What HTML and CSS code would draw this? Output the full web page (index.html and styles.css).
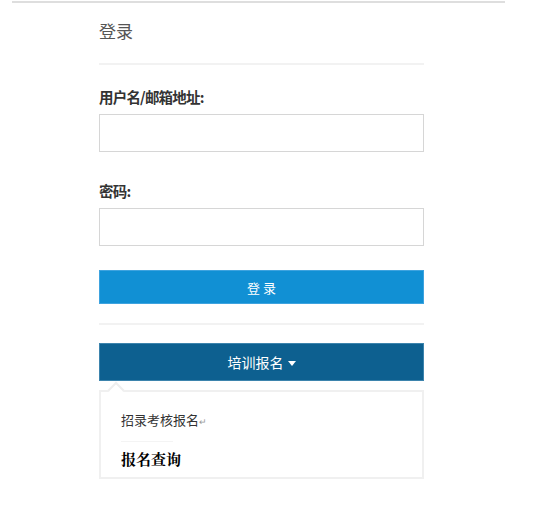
FILE: index.html
```html
<!DOCTYPE html>
<html lang="zh-CN">
<head>
<meta charset="utf-8">
<title>登录</title>
<link rel="stylesheet" href="styles.css">
</head>
<body>
<div class="topline"></div>
<div class="panel">
  <h1 class="title">登录</h1>
  <form class="login">
    <label class="label">用户名/邮箱地址:</label>
    <input class="input" type="text">
    <label class="label label-pwd">密码:</label>
    <input class="input" type="password">
    <button class="btn-login" type="button">登 录</button>
  </form>
  <div class="menu">
    <button class="btn-menu" type="button">培训报名<span class="caret"></span></button>
    <div class="dropdown">
      <div class="item">招录考核报名<span class="ret">↵</span></div>
      <div class="sep"></div>
      <div class="item item-bold">报名查询</div>
    </div>
  </div>
</div>
</body>
</html>
```
FILE: styles.css
```css
html, body {
  margin: 0;
  padding: 0;
  background: #fff;
}
body {
  font-family: "Noto Sans CJK SC", "Noto Sans", sans-serif;
  color: #333;
}
.topline {
  margin: 1px 41px 0 12px;
  height: 2px;
  background: #dedede;
}
.panel {
  margin-left: 99px;
  width: 325px;
}
.title {
  margin: 0;
  padding: 16px 0 20px;
  font-size: 17px;
  line-height: 24px;
  font-weight: normal;
  color: #555;
  border-bottom: 2px solid #f2f2f2;
}
.login {
  display: flex;
  flex-direction: column;
  padding-bottom: 19px;
  border-bottom: 2px solid #f2f2f2;
}
.label {
  margin-top: 22px;
  font-size: 14.5px;
  line-height: 20px;
  letter-spacing: -0.8px;
  font-weight: bold;
  color: #333;
}
.label-pwd {
  margin-top: 29px;
}
.input {
  margin: 7px 0 0;
  box-sizing: border-box;
  height: 38px;
  width: 100%;
  border: 1px solid #d6d6d6;
  background: #fff;
  padding: 0 10px;
  outline: none;
}
.btn-login {
  margin-top: 24px;
  height: 34px;
  border: 1px solid #3ea3df;
  background: #1190d4;
  color: #fff;
  font-family: inherit;
  font-size: 13px;
  padding: 0;
}
.menu {
  margin-top: 18px;
}
.btn-menu {
  display: flex;
  align-items: center;
  justify-content: center;
  width: 100%;
  height: 38px;
  border: 1px solid #3d84ad;
  background: #0d6090;
  color: #fff;
  font-family: inherit;
  font-size: 14px;
  padding: 0;
}
.caret {
  display: inline-block;
  margin-left: 4px;
  margin-top: 2px;
  width: 0;
  height: 0;
  border-left: 4px solid transparent;
  border-right: 4px solid transparent;
  border-top: 5px solid #fff;
}
.dropdown {
  position: relative;
  margin-top: 9px;
  box-sizing: border-box;
  height: 89px;
  border: 2px solid #f0f0f0;
  padding: 17px 20px 0;
}
.dropdown::before {
  content: "";
  position: absolute;
  left: 9px;
  top: -8px;
  width: 10px;
  height: 10px;
  background: #fff;
  border-left: 2px solid #eeeeee;
  border-top: 2px solid #eeeeee;
  transform: rotate(45deg);
}
.item {
  font-size: 13px;
  line-height: 22px;
  color: #333;
}
.ret {
  font-size: 9px;
  color: #999;
}
.sep {
  width: 52px;
  height: 1px;
  margin: 8px 0 6px;
  background: #f4f4f4;
}
.item-bold {
  font-size: 15px;
  font-family: "Noto Serif CJK SC", "Noto Sans CJK SC", serif;
  font-weight: bold;
  color: #000;
}
```
